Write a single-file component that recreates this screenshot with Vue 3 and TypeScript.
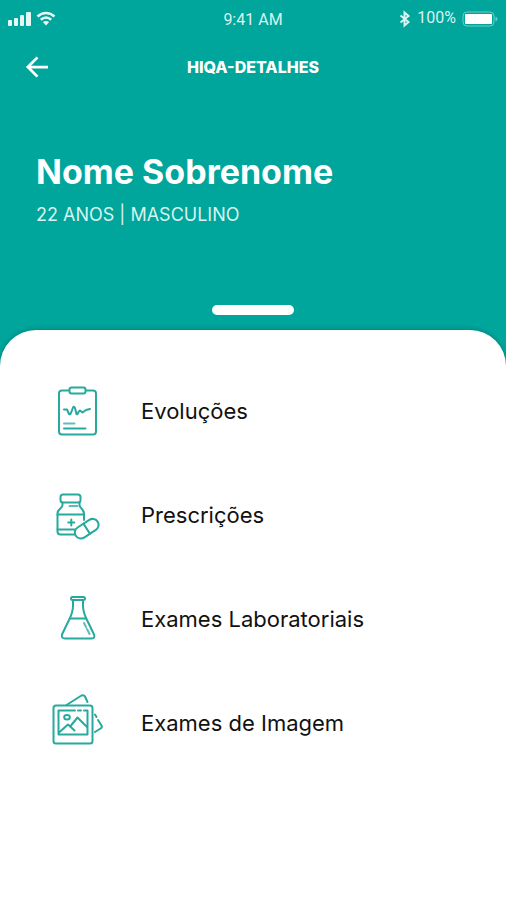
<script setup lang="ts">
type IconName = 'clipboard' | 'medicine' | 'flask' | 'photos'

interface MenuItem {
  label: string
  icon: IconName
  href: string
}

const patient = { name: 'Nome Sobrenome', summary: '22 ANOS | MASCULINO' }

const items: MenuItem[] = [
  { label: 'Evoluções', icon: 'clipboard', href: '#evolucoes' },
  { label: 'Prescrições', icon: 'medicine', href: '#prescricoes' },
  { label: 'Exames Laboratoriais', icon: 'flask', href: '#laboratoriais' },
  { label: 'Exames de Imagem', icon: 'photos', href: '#imagem' },
]
</script>

<template>
  <div class="screen">
    <header class="hero">
      <div class="status">
        <div class="status-left">
          <svg class="signal" viewBox="0 0 24 16" aria-hidden="true">
            <rect x="0" y="9" width="4" height="6" rx="1" />
            <rect x="6" y="7" width="4" height="8" rx="1" />
            <rect x="12" y="4" width="4" height="11" rx="1" />
            <rect x="18" y="1" width="5" height="14" rx="1" />
          </svg>
          <svg class="wifi" viewBox="0 0 20 16" aria-hidden="true">
            <path d="M1.5 5.5C6.500 .8 13.500 .8 18.500 5.500" />
            <path d="M4.800 8.800C8 6 12 6 15.200 8.800" />
            <path class="solid" d="M6.800 11C8.800 9.500 11.200 9.500 13.200 11L10 14.500Z" />
          </svg>
        </div>
        <span class="clock">9:41 AM</span>
        <div class="status-right">
          <svg class="bluetooth" viewBox="0 0 12 16" aria-hidden="true">
            <path d="M1.500 4.500L9.500 11L5.500 14.500V1.500L9.500 5L1.500 11.500" />
          </svg>
          <span class="percent">100%</span>
          <svg class="battery" viewBox="0 0 36 16" aria-hidden="true">
            <rect class="shell" x="1" y="1" width="31" height="14" rx="4" />
            <rect class="charge" x="3" y="3" width="27" height="10" rx="1" />
            <path class="tip" d="M33.500 5.500C36 6.500 36 9.500 33.500 10.500Z" />
          </svg>
        </div>
      </div>

      <nav class="bar">
        <button class="back" type="button" aria-label="Voltar">
          <svg viewBox="0 0 24 24" aria-hidden="true">
            <path d="M24 12H2.500M12.500 1.500L2 12L12.500 22.500" />
          </svg>
        </button>
        <h1 class="title">HIQA-DETALHES</h1>
      </nav>

      <section class="patient">
        <h2 class="name">{{ patient.name }}</h2>
        <p class="summary">{{ patient.summary }}</p>
      </section>

      <div class="handle"></div>
    </header>

    <main class="sheet">
      <ul class="menu">
        <li v-for="item in items" :key="item.icon">
          <a class="row" :href="item.href">
            <svg class="icon" viewBox="0 0 60 60" aria-hidden="true">
              <g v-if="item.icon === 'clipboard'">
                <path d="M22 9.500H15Q12 9.500 12 12.500V50.500Q12 53.500 15 53.500H46Q49 53.500 49 50.500V12.500Q49 9.500 46 9.500H39" />
                <rect x="22.500" y="6.500" width="16" height="6" rx="2" />
                <path d="M17 28.500H20L22 33Q23 34 24 32L26 26.500Q27 25 28 27L29.500 33Q30.500 34 31.500 31L33 29.500L35.500 31.500L39 29L43 28" />
                <path class="light" d="M17 42.500H27.500" />
                <path d="M17 47.500H38.500" />
              </g>
              <g v-else-if="item.icon === 'medicine'">
                <rect x="13.500" y="9.500" width="20" height="8" rx="2.500" />
                <path d="M15.500 17.500V20C15.500 23.500 10.500 23.500 10.500 28.500V46.500Q10.500 49.500 13.500 49.500H28M32.500 17.500V20C32.500 23.500 37 23.500 37 28.500V35" />
                <path d="M10.500 29.500H37M10.500 44.500H28" />
                <path class="light" d="M22.500 21H30.500" />
                <path d="M24.300 34.500V40.500M21.300 37.500H27.300" />
                <g transform="translate(39.700 43.700) rotate(-33)">
                  <rect class="pill" x="-13" y="-6" width="26" height="12" rx="6" />
                  <path d="M0 -6V6" />
                </g>
              </g>
              <g v-else-if="item.icon === 'flask'">
                <rect x="24" y="8" width="14" height="3" rx="1.500" />
                <path d="M26 11V17C26 24 23 29 21 33L15 45.500Q14 49.500 18 49.500H44.500Q48.500 49.500 47 45.500L41 33C39 29 36 24 36 17V11" />
                <path d="M23 29.500H39" />
                <path class="light" d="M37 34L39 38M40 40L42.500 45" />
              </g>
              <g v-else>
                <rect x="6.500" y="12.500" width="39" height="38" rx="2.500" />
                <path d="M28 17.500H11.500V41.500H40.500V17.500H37M31 17.500H34" />
                <ellipse cx="20" cy="24.300" rx="2.800" ry="2.300" />
                <path d="M12 39.500L21 31.500L27.500 37.500M24 32.500L30.500 24.500L40 34" />
                <path d="M19.500 12L34.500 2.500Q37 1.500 38 3.500L40.500 9M48 21.500L49.500 24M51 27L54.500 32.500Q55.500 34.500 53.500 35.500L48 39" />
              </g>
            </svg>
            <span class="label">{{ item.label }}</span>
          </a>
        </li>
      </ul>
    </main>
  </div>
</template>

<style>
body {
  margin: 0;
  background: #fff;
}
</style>

<style scoped>
.screen {
  min-height: 100vh;
  display: flex;
  flex-direction: column;
  background: #00a59b;
  font-family: Inter, "Liberation Sans", sans-serif;
}

.hero {
  display: flex;
  flex-direction: column;
  color: #fff;
}

svg {
  display: block;
  flex: none;
  overflow: visible;
}

.status {
  display: grid;
  grid-template-columns: 1fr auto 1fr;
  align-items: center;
  height: 38px;
  padding: 0 8px;
  font-family: Roboto, "Liberation Sans", sans-serif;
  font-size: 16px;
  color: #d8f3f0;
}

.status-left,
.status-right {
  display: flex;
  align-items: center;
}

.status-left {
  gap: 4px;
}

.status-right {
  justify-content: flex-end;
  gap: 6px;
}

.signal {
  width: 24px;
  height: 16px;
  fill: #e6f8f6;
}

.wifi {
  width: 20px;
  height: 16px;
  fill: none;
  stroke: #e6f8f6;
  stroke-width: 2.5;
}

.wifi .solid {
  fill: #e6f8f6;
  stroke: none;
}

.bluetooth {
  width: 12px;
  height: 16px;
  fill: none;
  stroke: #d8f3f0;
  stroke-width: 2;
}

.percent {
  padding-bottom: 4px;
}

.battery {
  width: 36px;
  height: 16px;
}

.shell {
  fill: none;
  stroke: #6fcdc6;
  stroke-width: 1;
}

.charge {
  fill: #fff;
}

.tip {
  fill: #6fcdc6;
}

.bar {
  display: grid;
  grid-template-columns: 48px 1fr 48px;
  align-items: center;
  height: 58px;
  padding: 0 14px;
}

.back {
  display: grid;
  place-items: center;
  width: 46px;
  height: 46px;
  padding: 0;
  border: 0;
  background: none;
  cursor: pointer;
}

.back svg {
  width: 22px;
  height: 22px;
  fill: none;
  stroke: #fff;
  stroke-width: 3;
}

.title {
  margin: 0;
  text-align: center;
  font-size: 16px;
  line-height: 24px;
  font-weight: 800;
}

.patient {
  padding: 54px 36px 0;
}

.name {
  margin: 0;
  font-size: 34px;
  line-height: 44px;
  font-weight: 700;
}

.summary {
  margin: 6px 0 0;
  font-size: 18px;
  line-height: 30px;
  color: #d8f3f0;
}

.handle {
  align-self: center;
  width: 82px;
  height: 10px;
  margin: 75px 0 15px;
  border-radius: 5px;
  background: #fff;
}

.sheet {
  flex: 1;
  padding: 29px 47px;
  border-radius: 36px 36px 0 0;
  background: #fff;
  box-shadow: 0 -1px 4px rgba(0, 60, 55, 0.3);
}

.menu {
  margin: 0;
  padding: 0;
  list-style: none;
}

.row {
  display: flex;
  align-items: center;
  gap: 34px;
  height: 104px;
  color: #111;
  text-decoration: none;
}

.icon {
  width: 60px;
  height: 60px;
  fill: none;
  stroke: #27a99e;
  stroke-width: 2;
  stroke-linecap: round;
  stroke-linejoin: round;
}

.icon .light {
  stroke: #5dbfb7;
}

.icon .pill {
  fill: #fff;
}

.label {
  font-size: 22px;
  line-height: 32px;
}
</style>
